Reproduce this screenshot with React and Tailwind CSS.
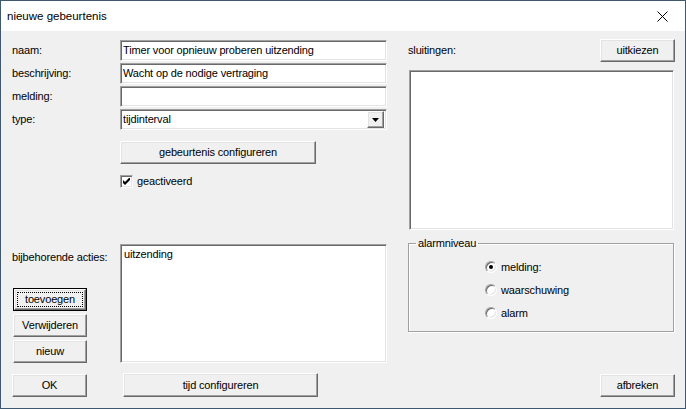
import React from 'react';

const sunken =
  'border border-t-[#a0a0a0] border-l-[#a0a0a0] border-r-white border-b-white shadow-[inset_1px_1px_0_#696969,inset_-1px_-1px_0_#e3e3e3] bg-white';

const raised =
  'border border-t-white border-l-white border-r-[#696969] border-b-[#696969] shadow-[inset_-1px_-1px_0_#a0a0a0,inset_1px_1px_0_#e3e3e3] bg-[#f0f0f0]';

const Button = ({ children, className = '' }) => (
  <div className={`${raised} flex items-center justify-center h-[23px] ${className}`}>
    {children}
  </div>
);

// default button: black frame + focus rectangle
const DefaultButton = ({ children, className = '' }) => (
  <div className={`border border-black h-[23px] flex ${className}`}>
    <div className={`${raised} flex-1 flex p-[2px]`}>
      <div className="flex-1 flex items-center justify-center border border-dotted border-black">
        {children}
      </div>
    </div>
  </div>
);

const TextField = ({ value }) => (
  <div className={`${sunken} h-[21px] flex items-center pl-[2px] whitespace-nowrap overflow-hidden`}>
    {value}
  </div>
);

const Combo = ({ value }) => (
  <div className={`${sunken} h-[21px] flex items-center pl-[2px] pr-[2px]`}>
    <span className="flex-1">{value}</span>
    <div className={`${raised} w-[17px] h-[17px] flex items-center justify-center`}>
      <svg width="7" height="4" viewBox="0 0 7 4">
        <path d="M0 0h7L3.5 4z" fill="#000" />
      </svg>
    </div>
  </div>
);

const Radio = ({ label, checked }) => (
  <div className="flex items-center h-[14px] gap-[4px]">
    <div className="w-[12px] h-[12px] rounded-full border border-t-[#a0a0a0] border-l-[#a0a0a0] border-r-white border-b-white bg-white shadow-[inset_1px_1px_0_#696969,inset_-1px_-1px_0_#e3e3e3] flex items-center justify-center">
      {checked && <div className="w-[4px] h-[4px] rounded-full bg-black" />}
    </div>
    <span>{label}</span>
  </div>
);

export default function App() {
  return (
    <div className="w-[686px] h-[409px] border border-[#3f5871] flex flex-col font-['Liberation_Sans',Arial,sans-serif] text-[11px] tracking-[-0.15px] text-black leading-[13px]">
      {/* title bar */}
      <div className="h-[30px] bg-white flex items-center justify-between pl-[6px]">
        <span className="text-[11.5px] tracking-normal">nieuwe gebeurtenis</span>
        <div className="w-[46px] h-[30px] flex items-center justify-center">
          <svg width="11" height="11" viewBox="0 0 11 11">
            <path d="M0.5 0.5l10 10M10.5 0.5l-10 10" stroke="#000" strokeWidth="1" />
          </svg>
        </div>
      </div>

      {/* body */}
      <div className="flex-1 flex bg-[#f0f0f0]">
        {/* left column */}
        <div className="w-[396px] pl-[11px] pt-[9px] pb-[11px] flex flex-col">
          <div className="grid grid-cols-[108px_267px] gap-y-[2px]">
            <div className="flex items-center">naam:</div>
            <TextField value="Timer voor opnieuw proberen uitzending" />
            <div className="flex items-center">beschrijving:</div>
            <TextField value="Wacht op de nodige vertraging" />
            <div className="flex items-center">melding:</div>
            <TextField value="" />
            <div className="flex items-center">type:</div>
            <Combo value="tijdinterval" />
          </div>

          <Button className="ml-[108px] mt-[11px] w-[196px]">gebeurtenis configureren</Button>

          <div className="ml-[108px] mt-[11px] flex items-center gap-[4px] h-[13px]">
            <div className={`${sunken} w-[13px] h-[13px] flex items-center justify-center`}>
              <svg width="7" height="7" viewBox="0 0 7 7">
                <path d="M0 2L2 4L7 -1V2L2 7L0 5Z" fill="#000" />
              </svg>
            </div>
            <span>geactiveerd</span>
          </div>

          <div className="mt-[56px] flex h-[119px]">
            <div className="w-[108px] flex flex-col">
              <div className="mt-[7px]">bijbehorende acties:</div>
              <div className="mt-auto ml-[1px] w-[74px] flex flex-col gap-[3px]">
                <DefaultButton>toevoegen</DefaultButton>
                <Button>Verwijderen</Button>
                <Button>nieuw</Button>
              </div>
            </div>
            <div className={`${sunken} w-[267px] pl-[3px] pt-[3px]`}>uitzending</div>
          </div>

          <div className="mt-auto flex items-end gap-[36px]">
            <Button className="w-[75px]">OK</Button>
            <Button className="w-[195px] h-[24px]">tijd configureren</Button>
          </div>
        </div>

        {/* right column */}
        <div className="flex-1 pl-[11px] pr-[10px] pt-[8px] pb-[11px] flex flex-col">
          <div className="flex items-center justify-between h-[23px]">
            <span>sluitingen:</span>
            <Button className="w-[75px]">uitkiezen</Button>
          </div>
          <div className={`${sunken} mt-[8px] mx-[1px] h-[160px]`} />

          <fieldset className="mt-[7px] mr-[1px] h-[95px] border border-[#a0a0a0] shadow-[1px_1px_0_#fff,inset_1px_1px_0_#fff] px-0">
            <legend className="ml-[7px] px-[2px]">alarmniveau</legend>
            <div className="pl-[76px] pt-[10px] flex flex-col gap-[9px]">
              <Radio label="melding:" checked />
              <Radio label="waarschuwing" />
              <Radio label="alarm" />
            </div>
          </fieldset>

          <div className="mt-auto flex justify-end">
            <Button className="w-[75px]">afbreken</Button>
          </div>
        </div>
      </div>
    </div>
  );
}
